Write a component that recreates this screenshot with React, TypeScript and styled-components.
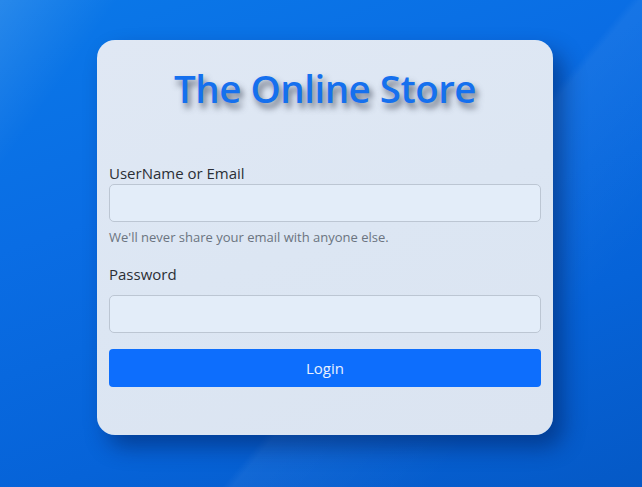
import React, { useState } from 'react';
import styled, { createGlobalStyle } from 'styled-components';

const GlobalStyle = createGlobalStyle`
  html, body {
    margin: 0;
    padding: 0;
    height: 100%;
  }
  body {
    font-family: 'Open Sans', 'Noto Sans', sans-serif;
  }
  #root {
    height: 100%;
  }
`;

const Page = styled.div`
  box-sizing: border-box;
  height: 100%;
  min-height: 487px;
  padding: 40px 0 0 8px;
  display: flex;
  justify-content: center;
  align-items: flex-start;
  background:
    linear-gradient(125deg, rgba(255, 255, 255, 0.12) 0%, rgba(255, 255, 255, 0) 12%),
    linear-gradient(130deg, rgba(255, 255, 255, 0) 60%, rgba(255, 255, 255, 0.05) 61%, rgba(255, 255, 255, 0) 80%),
    linear-gradient(160deg, #0a78e8 0%, #0a6de4 35%, #0663d8 70%, #0559c6 100%);
`;

const Card = styled.form`
  box-sizing: border-box;
  width: 456px;
  height: 395px;
  padding: 0 12px;
  border-radius: 18px;
  background: linear-gradient(160deg, #e0e8f4 0%, #dce6f3 50%, #dbe4f1 100%);
  box-shadow: 10px 12px 22px rgba(0, 20, 70, 0.45);
  display: flex;
  flex-direction: column;
`;

const Title = styled.h1`
  margin: 25px 0 0;
  text-align: center;
  font-family: 'Open Sans', 'Noto Sans', sans-serif;
  font-size: 38.5px;
  font-weight: 600;
  line-height: 46px;
  letter-spacing: -0.5px;
  color: #1570ee;
  text-shadow: 3px 5px 6px rgba(70, 78, 95, 0.8);
`;

const Label = styled.label<{ $gap?: number }>`
  display: block;
  margin-top: ${(p) => p.$gap ?? 0}px;
  font-size: 15px;
  line-height: 22px;
  color: #2b2f36;
`;

const Input = styled.input<{ $gap?: number }>`
  box-sizing: border-box;
  display: block;
  width: 100%;
  height: 38px;
  margin-top: ${(p) => p.$gap ?? 0}px;
  padding: 6px 12px;
  border: 1px solid #bcc6d3;
  border-radius: 5px;
  background: #e3edf9;
  font-family: inherit;
  font-size: 15px;
  outline: none;
`;

const Help = styled.div`
  margin-top: 6px;
  font-size: 13px;
  line-height: 19px;
  color: #6b7480;
`;

const Button = styled.button`
  box-sizing: border-box;
  width: 100%;
  height: 38px;
  margin-top: 16px;
  border: none;
  border-radius: 4px;
  background: #0d6efd;
  color: #e9f1ff;
  font-family: inherit;
  font-size: 15px;
  cursor: pointer;
`;

const App: React.FC = () => {
  const [user, setUser] = useState('');
  const [pass, setPass] = useState('');

  return (
    <>
      <GlobalStyle />
      <Page>
        <Card onSubmit={(e) => e.preventDefault()}>
          <Title>The Online Store</Title>
          <Label $gap={51} htmlFor="user">UserName or Email</Label>
          <Input id="user" value={user} onChange={(e) => setUser(e.target.value)} />
          <Help>We'll never share your email with anyone else.</Help>
          <Label $gap={16} htmlFor="pass">Password</Label>
          <Input id="pass" type="password" $gap={10} value={pass} onChange={(e) => setPass(e.target.value)} />
          <Button type="submit">Login</Button>
        </Card>
      </Page>
    </>
  );
};

export default App;
